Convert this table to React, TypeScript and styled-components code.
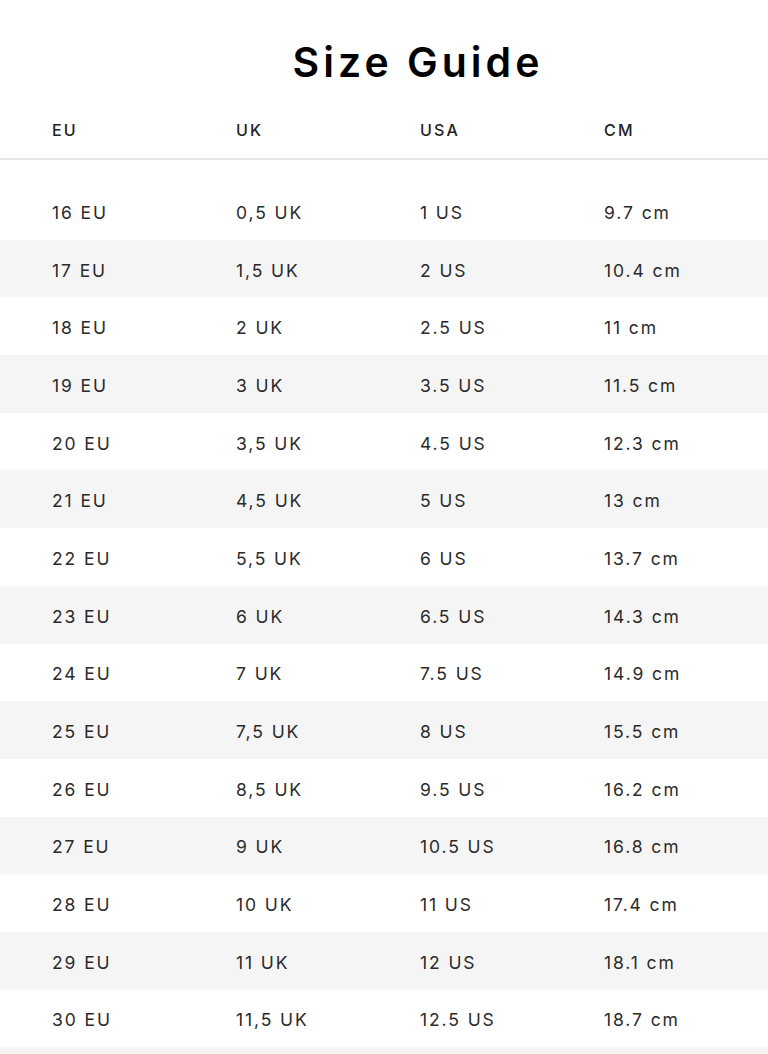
import React from 'react';
import styled, { createGlobalStyle } from 'styled-components';

const GlobalStyle = createGlobalStyle`
  body {
    margin: 0;
    background: #ffffff;
    font-family: Inter, 'Noto Sans', sans-serif;
  }
`;

const Page = styled.div`
  width: 768px;
  overflow: hidden;
`;

const Title = styled.h1`
  margin: 38px 0 15px;
  padding-left: 68px;
  line-height: 48px;
  font-size: 41px;
  font-weight: 600;
  letter-spacing: 4px;
  text-align: center;
  color: #000;
`;

const HeadRow = styled.div`
  display: grid;
  grid-template-columns: 184px 184px 184px 184px;
  align-items: center;
  height: 57px;
  padding-left: 52px;
  border-bottom: 2px solid #e8e8e8;
`;

const HeadCell = styled.div`
  font-size: 16px;
  font-weight: 500;
  letter-spacing: 2.2px;
  color: #222;
`;

const Body = styled.div`
  padding-top: 22px;
`;

const Row = styled.div<{ striped: boolean }>`
  display: grid;
  grid-template-columns: 184px 184px 184px 184px;
  align-items: center;
  height: 57.7px;
  padding-left: 52px;
  background: ${({ striped }) => (striped ? '#f5f5f5' : '#ffffff')};
`;

const Cell = styled.div`
  padding-top: 3px;
  font-size: 17.5px;
  letter-spacing: 1.9px;
  color: #2b2b2b;
`;

const sizes: [string, string, string, string][] = [
  ['16 EU', '0,5 UK', '1 US', '9.7 cm'],
  ['17 EU', '1,5 UK', '2 US', '10.4 cm'],
  ['18 EU', '2 UK', '2.5 US', '11 cm'],
  ['19 EU', '3 UK', '3.5 US', '11.5 cm'],
  ['20 EU', '3,5 UK', '4.5 US', '12.3 cm'],
  ['21 EU', '4,5 UK', '5 US', '13 cm'],
  ['22 EU', '5,5 UK', '6 US', '13.7 cm'],
  ['23 EU', '6 UK', '6.5 US', '14.3 cm'],
  ['24 EU', '7 UK', '7.5 US', '14.9 cm'],
  ['25 EU', '7,5 UK', '8 US', '15.5 cm'],
  ['26 EU', '8,5 UK', '9.5 US', '16.2 cm'],
  ['27 EU', '9 UK', '10.5 US', '16.8 cm'],
  ['28 EU', '10 UK', '11 US', '17.4 cm'],
  ['29 EU', '11 UK', '12 US', '18.1 cm'],
  ['30 EU', '11,5 UK', '12.5 US', '18.7 cm'],
];

export default function App() {
  return (
    <Page>
      <GlobalStyle />
      <Title>Size Guide</Title>
      <HeadRow>
        <HeadCell>EU</HeadCell>
        <HeadCell>UK</HeadCell>
        <HeadCell>USA</HeadCell>
        <HeadCell>CM</HeadCell>
      </HeadRow>
      <Body>
        {sizes.map((row, i) => (
          <Row key={row[0]} striped={i % 2 === 1}>
            {row.map((v) => (
              <Cell key={v}>{v}</Cell>
            ))}
          </Row>
        ))}
        <Row striped={sizes.length % 2 === 1} />
      </Body>
    </Page>
  );
}
